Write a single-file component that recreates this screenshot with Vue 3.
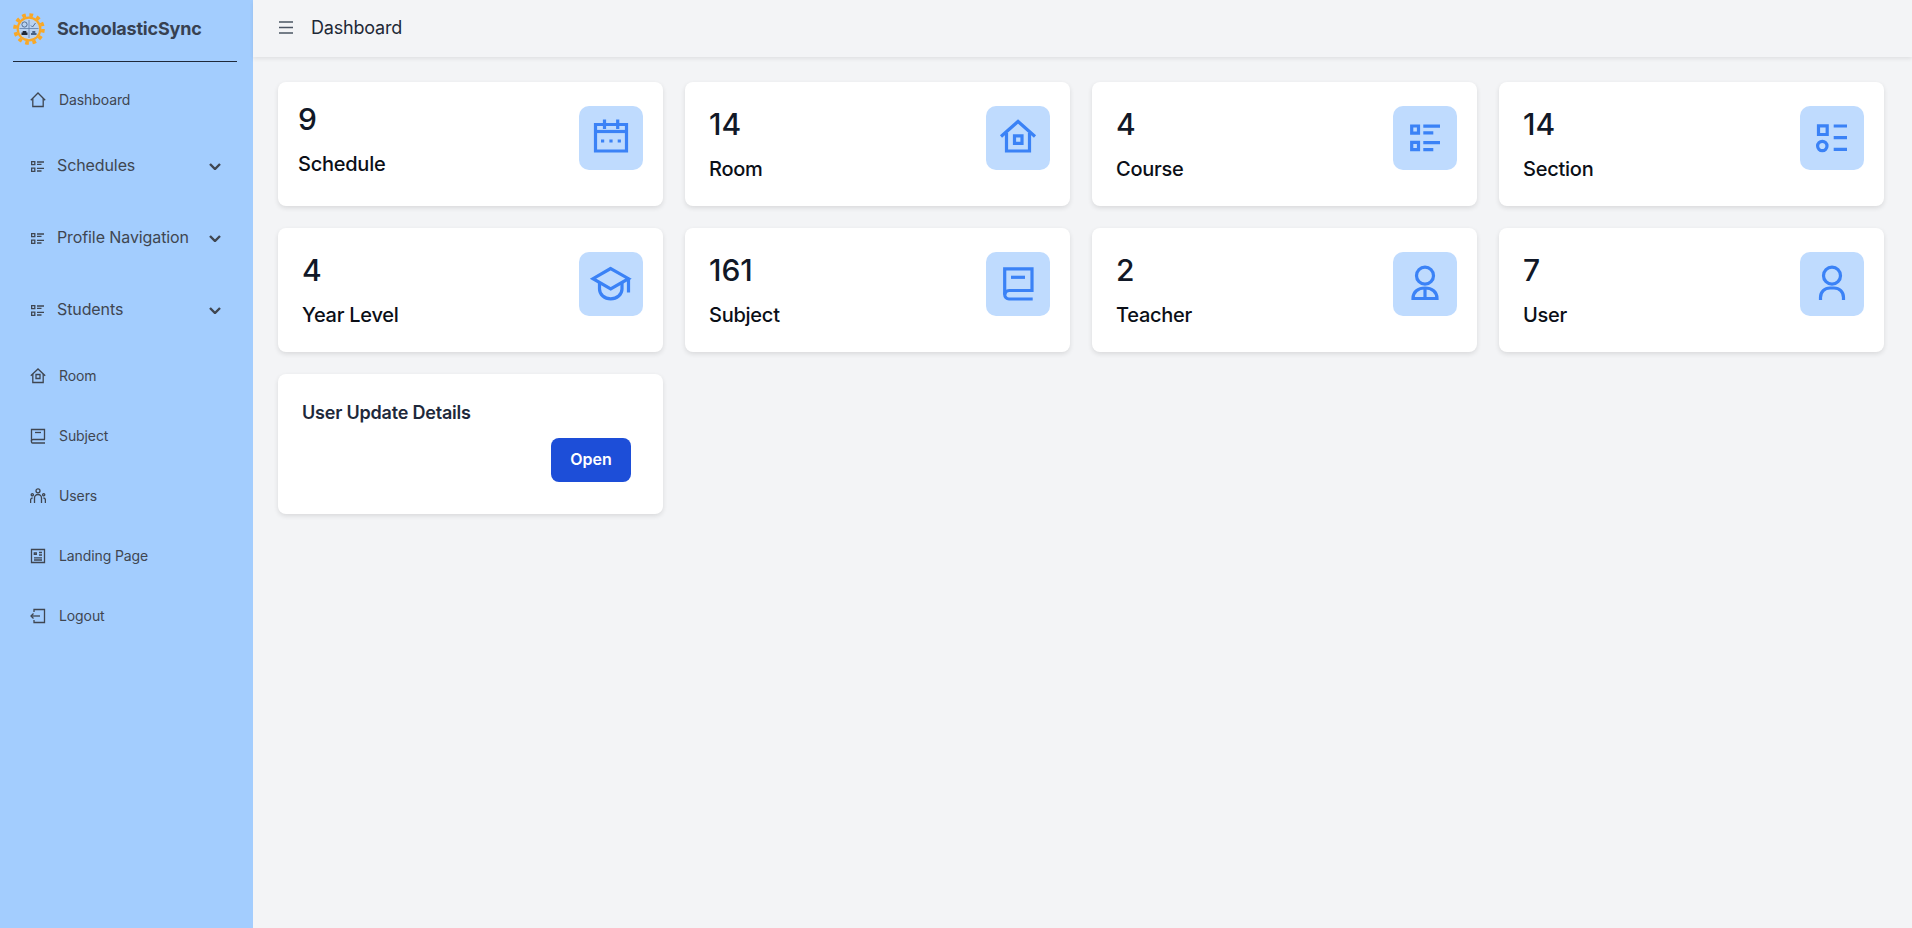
<template>
  <div class="layout">
    <aside class="sidebar">
      <div class="brand">
        <svg class="brand__logo" viewBox="0 0 32 32" width="32" height="32">
          <circle cx="16" cy="16" r="14" fill="none" stroke="#f9a826" stroke-width="3.6" stroke-dasharray="3.7 3.63" />
          <circle cx="16" cy="16" r="12.4" fill="#f9a826" />
          <circle cx="16" cy="16" r="10.2" fill="#b9d3f2" />
          <path d="M6.5 15.5H25.5M16 7V25" stroke="#5f7fa8" stroke-width="0.8" fill="none" />
          <circle cx="11.5" cy="11.5" r="2.6" fill="none" stroke="#4a6488" stroke-width="0.9" />
          <path d="M18 12.5l1.5 1.5 3-4" stroke="#4a6488" stroke-width="0.9" fill="none" />
          <path d="M8.5 22h6v-2.5h-1.2v-1.5h-3.6v1.5h-1.2z" fill="#1f2937" />
          <path d="M18 22h5.5v-2h-1.2v-2h-3v2H18z" fill="#4a6488" />
        </svg>
        <span class="brand__name">SchoolasticSync</span>
      </div>

      <nav class="nav">
        <template v-for="item in navItems" :key="item.label">
          <div v-if="item.dropdown" class="nav__group">
            <svg class="nav__list-icon" viewBox="0 0 13 11" width="13" height="11">
              <path d="M.6.6h3.200v3H.6zM.6 7.200h3.200v3.100H.6zM6 1h7M6 3.400h4.500M6 7.400h7M6 10h4.500" />
            </svg>
            <span class="nav__group-label">{{ item.label }}</span>
            <svg class="nav__chevron" viewBox="0 0 12 7" width="12" height="7">
              <path d="M1 1l5 5 5-5" />
            </svg>
          </div>
          <div v-else class="nav__link">
            <svg class="nav__icon" viewBox="0 0 16 16" width="16" height="16">
              <path v-for="d in item.icon" :key="d" :d="d" />
            </svg>
            <span class="nav__link-label">{{ item.label }}</span>
          </div>
        </template>
      </nav>
    </aside>

    <div class="content">
      <header class="topbar">
        <svg class="topbar__menu" viewBox="0 0 14 13" width="14" height="13">
          <path d="M0 1h14M0 6.500h14M0 12h14" />
        </svg>
        <span class="topbar__title">Dashboard</span>
      </header>

      <main class="grid">
        <div v-for="card in cards" :key="card.label" class="card" :class="{ 'card--tight': card.tight }">
          <div class="card__text">
            <div class="card__count">{{ card.count }}</div>
            <div class="card__label">{{ card.label }}</div>
          </div>
          <div class="card__icon">
            <svg viewBox="0 0 64 64" width="64" height="64">
              <path v-for="d in card.icon" :key="d" :d="d" />
            </svg>
          </div>
        </div>

        <div class="card card--action">
          <div class="card__title">User Update Details</div>
          <div class="card__actions">
            <button class="open-btn" type="button">Open</button>
          </div>
        </div>
      </main>
    </div>
  </div>
</template>

<script setup>
const navItems = [
  { label: "Dashboard", icon: ["M.8 8.200L8 1l7.200 7.200", "M2.800 6.500V14.500H13.200V6.500"] },
  { label: "Schedules", dropdown: true },
  { label: "Profile Navigation", dropdown: true },
  { label: "Students", dropdown: true },
  {
    label: "Room",
    icon: ["M.8 7.800L8 1l7.200 6.800", "M2.800 6V14.500H13.200V6", "M6 6.500h4v4H6z"],
  },
  {
    label: "Subject",
    icon: ["M15 11.500H3a1.800 1.800 0 0 0-1.800 1.800", "M1.500 14a1 1 0 0 0 1 1H15", "M1.500 14V1.500H14.500V11.500", "M5 4.500h6"],
  },
  {
    label: "Users",
    icon: [
      "M10 2.800a2 2 0 1 1-4 0a2 2 0 1 1 4 0z",
      "M4.500 15V10a3.500 3.500 0 0 1 7 0v5",
      "M3.400 6.800a1.100 1.100 0 1 1-2.200 0a1.100 1.100 0 1 1 2.200 0z",
      "M14.800 6.800a1.100 1.100 0 1 1-2.200 0a1.100 1.100 0 1 1 2.200 0z",
      "M.6 15v-3a2 2 0 0 1 2-2",
      "M15.400 15v-3a2 2 0 0 0-2-2",
    ],
  },
  {
    label: "Landing Page",
    icon: ["M1.500 1.500h13v13h-13z", "M4.300 4.800h2v1.500h-2z", "M9 4.500h3M9 7h3M4 9.800h8M4 12h8"],
  },
  {
    label: "Logout",
    icon: ["M4 4V1.500H14.500V14.500H4V12", "M10 8H1", "M3.500 5.500L1 8l2.500 2.500"],
  },
];

const cards = [
  {
    count: "9",
    label: "Schedule",
    tight: true,
    icon: [
      "M16.500 18.500H47.500V45H16.500z",
      "M25.500 13.500V23M38.700 13.500V23",
      "M16.500 25.500H47.500",
      "M22 35h3.200M30.400 35h3.200M38.700 35h3.200",
    ],
  },
  {
    count: "14",
    label: "Room",
    icon: ["M15 30.500L32 15.500l17 15", "M20.500 27V45H43.500V27", "M28.500 29.800h7.500v7.500h-7.500z"],
  },
  {
    count: "4",
    label: "Course",
    icon: [
      "M18.700 20h6.800v7.200h-6.800z",
      "M18.700 36.300h6.800v7.300h-6.800z",
      "M30.300 20.200H47M30.300 26.900H40.300M30.300 36.700H47M30.300 43.700H40.300",
    ],
  },
  {
    count: "14",
    label: "Section",
    icon: [
      "M18.500 19.800h8.700v8.700h-8.700z",
      "M27 40a4.700 4.700 0 1 1-9.400 0a4.700 4.700 0 1 1 9.400 0z",
      "M33.700 20H47M33.700 31.700H47M33.700 43.300H47",
    ],
  },
  {
    count: "4",
    label: "Year Level",
    icon: [
      "M31.700 16.500L14 26.700 31.700 37 49.500 26.700z",
      "M49.500 26.700V40.500",
      "M20.500 30.500V37c0 5.500 5 9.800 11.200 9.800S43 42.500 43 37V30.500",
    ],
  },
  {
    count: "161",
    label: "Subject",
    icon: [
      "M46.700 47H23a4.500 4.500 0 0 1-4.300-4.500V16.800H46V38.500H23",
      "M18.700 42.500A4.500 4.500 0 0 1 23 38.500",
      "M25 25.300H39",
    ],
  },
  {
    count: "2",
    label: "Teacher",
    icon: [
      "M40.500 23.700a8.500 8.500 0 1 1-17 0a8.500 8.500 0 1 1 17 0z",
      "M20 46.500c0-6.500 5-10.500 12-10.500s12 4 12 10.500z",
      "M32 36.500V46",
    ],
  },
  {
    count: "7",
    label: "User",
    icon: [
      "M40.500 23.700a8.500 8.500 0 1 1-17 0a8.500 8.500 0 1 1 17 0z",
      "M20.500 48v-2.500c0-5.500 4-9.500 9.500-9.500h4c5.500 0 9.500 4 9.500 9.500V48",
    ],
  },
];
</script>

<style>
body {
  margin: 0;
  background: #f3f4f6;
}
</style>

<style scoped>
.layout {
  display: flex;
  min-height: 928px;
  font-family: Inter, "Liberation Sans", sans-serif;
}

.sidebar {
  flex: 0 0 253px;
  background: #a3cdfe;
  color: #3f4651;
}

.brand {
  display: flex;
  align-items: center;
  gap: 12px;
  height: 61px;
  margin: 0 16px 8px 13px;
  border-bottom: 1px solid #1e293b;
  box-sizing: content-box;
}

.brand__logo {
  flex: none;
  margin-top: -3px;
}

.brand__name {
  font-size: 18px;
  font-weight: 700;
  letter-spacing: -0.2px;
  color: #374151;
  margin-top: -4px;
}

.nav__link,
.nav__group {
  display: flex;
  align-items: center;
}

.nav__link {
  height: 60px;
  padding-left: 30px;
  gap: 13px;
  font-size: 14px;
}

.nav__link-label {
  margin-bottom: 2px;
  letter-spacing: -0.1px;
}

.nav__group {
  height: 72px;
  padding-left: 31px;
  font-size: 16px;
}

.nav__group-label {
  margin: 0 0 2px 13px;
  letter-spacing: -0.1px;
}

.nav__list-icon {
  flex: none;
  fill: none;
  stroke: #3f4651;
  stroke-width: 1.300;
}

.nav__chevron {
  flex: none;
  position: absolute;
  left: 209px;
  fill: none;
  stroke: #3f4651;
  stroke-width: 2.400;
}

.nav__icon {
  flex: none;
  fill: none;
  stroke: #3f4651;
  stroke-width: 1.300;
}

.content {
  flex: 1;
  min-width: 0;
}

.topbar {
  display: flex;
  align-items: center;
  gap: 18px;
  height: 57px;
  padding-left: 26px;
  background: #f3f4f6;
  box-shadow: 0 2px 4px rgba(0, 0, 0, 0.08);
  box-sizing: border-box;
}

.topbar__menu {
  margin-top: -2px;
  fill: none;
  stroke: #4b5563;
  stroke-width: 1.300;
}

.topbar__title {
  margin-bottom: 3px;
  font-size: 18px;
  letter-spacing: -0.2px;
  color: #1f2937;
}

.grid {
  display: grid;
  grid-template-columns: repeat(4, 385px);
  gap: 22px;
  align-items: start;
  padding: 25px 0 0 25px;
}

.card {
  display: flex;
  justify-content: space-between;
  height: 124px;
  padding: 24px 20px 0 24px;
  background: #ffffff;
  border-radius: 8px;
  box-shadow: 0 2px 5px rgba(0, 0, 0, 0.11);
  box-sizing: border-box;
}

.card--tight {
  padding-left: 20px;
  padding-top: 19px;
}

.card--tight .card__icon {
  margin-top: 5px;
}

.card__count {
  font-size: 30px;
  line-height: 36px;
  font-weight: 500;
  color: #111827;
}

.card__label {
  margin-top: 13px;
  font-size: 20px;
  line-height: 28px;
  font-weight: 500;
  letter-spacing: -0.25px;
  color: #0b0f17;
}

.card__icon {
  width: 64px;
  height: 64px;
  border-radius: 10px;
  background: #bfdbfe;
}

.card__icon svg {
  display: block;
  fill: none;
  stroke: #3b82f6;
  stroke-width: 3.200;
}

.card--action {
  display: block;
  height: 140px;
  padding: 25px 32px 0 24px;
}

.card__title {
  font-size: 18px;
  line-height: 28px;
  font-weight: 600;
  letter-spacing: -0.2px;
  color: #1e293b;
}

.card__actions {
  display: flex;
  justify-content: flex-end;
  margin-top: 11px;
}

.open-btn {
  width: 80px;
  height: 44px;
  padding: 0 0 2px;
  border: none;
  border-radius: 8px;
  background: #1d4ed8;
  color: #ffffff;
  font-family: inherit;
  font-size: 16px;
  font-weight: 600;
}
</style>
